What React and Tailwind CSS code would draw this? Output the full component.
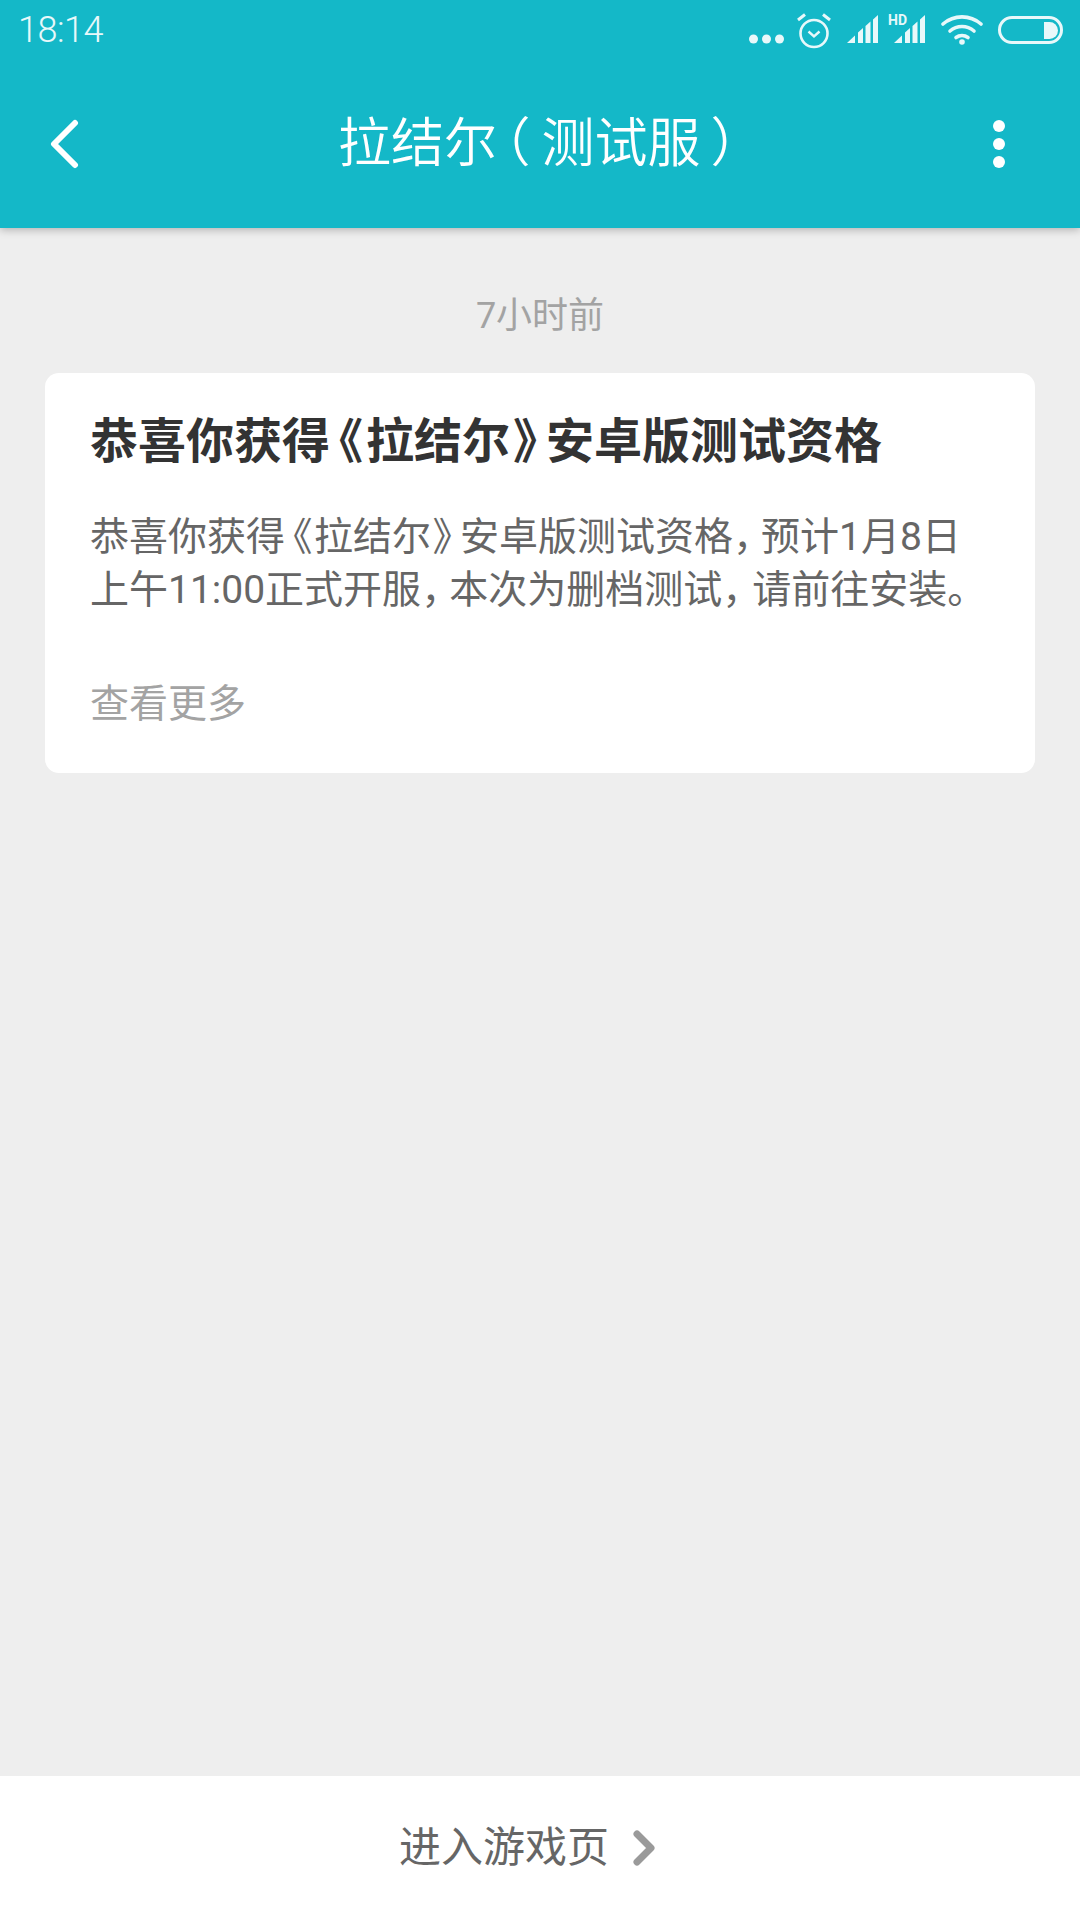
const cjk = { fontFamily: '"Roboto", "Noto Sans CJK SC", sans-serif' };

// half-width punctuation, like the reference font
const halt = "[font-feature-settings:'halt']";

// signal bars, tops follow one slope
function Signal() {
  return (
    <svg width="31" height="28" viewBox="0 0 31 28" fill="#e8f8fa">
      <path d="M0 28L8 20.500V28z" />
      <path d="M11 17.500L16 13V28H11z" />
      <path d="M18.500 11L23.500 6.500V28H18.500z" />
      <path d="M26 4.500L31 0V28H26z" />
    </svg>
  );
}

function StatusIcons() {
  return (
    <div className="flex items-center">
      <svg width="35" height="10" viewBox="0 0 35 10" className="mt-[18px]" fill="#e8f8fa">
        <circle cx="4.500" cy="5" r="4.500" />
        <circle cx="17.500" cy="5" r="4.500" />
        <circle cx="30.500" cy="5" r="4.500" />
      </svg>
      <svg width="34" height="36" viewBox="0 0 34 36" className="ml-[13px] mt-[2px]" fill="none" stroke="#e8f8fa" strokeWidth="2.600">
        <circle cx="17" cy="20.500" r="13.500" />
        <path d="M11.500 18.500l5.500 5 5.500-5" strokeWidth="2.400" />
        <path d="M1 7l7-5.500M33 7l-7-5.500" strokeWidth="3" />
      </svg>
      <div className="ml-[16px] mb-[2px]">
        <Signal />
      </div>
      <div className="relative ml-[15px] mb-[2px] w-[32px] h-[28px] flex justify-end">
        <span className="absolute left-[-5px] top-[-2px] text-[14px] font-bold text-[#e8f8fa] leading-none">HD</span>
        <Signal />
      </div>
      <svg width="42" height="30" viewBox="0 0 42 30" className="ml-[16px]" fill="none" stroke="#e8f8fa" strokeWidth="3.600" strokeLinecap="round">
        <path d="M2 9c11-9.500 27-9.500 38 0" />
        <path d="M9 16c7-6 17-6 24 0" />
        <path d="M15 22.500c3.500-2.500 8.500-2.500 12 0" />
        <circle cx="21" cy="27" r="2.800" fill="#e8f8fa" stroke="none" />
      </svg>
      <div className="ml-[15px] w-[65px] h-[28px] rounded-full border-[3px] border-[#e8f8fa] flex items-center justify-end pr-[2px]">
        <div className="w-[14px] h-[17px] bg-[#e8f8fa] rounded-l-[2px] rounded-r-full" />
      </div>
    </div>
  );
}

export default function App() {
  return (
    <div className="w-[1080px] h-[1920px] flex flex-col bg-[#eeeeee]" style={cjk}>
      <header className="h-[228px] bg-[#14b8c8] flex flex-col shadow-[0_2px_8px_rgba(0,0,0,0.25)] z-10">
        <div className="h-[60px] flex items-center justify-between pl-[18px] pr-[17px]">
          <span className="text-[36px] font-light tracking-[-0.5px] text-[#e8f8fa] leading-none">18:14</span>
          <StatusIcons />
        </div>
        <div className="flex-1 flex items-center justify-between pl-[49px] pr-[74px]">
          <svg width="30" height="54" viewBox="0 0 30 54" fill="none" stroke="#fff" strokeWidth="6" strokeLinecap="round" strokeLinejoin="round">
            <path d="M26 6L5 27l21 21" />
          </svg>
          <h1 className="text-[53px] text-white font-[350] leading-none whitespace-nowrap ml-[4px]">
            拉结尔<span className={`${halt} ml-[7px] mr-[11px]`}>（</span>测试服<span className={`${halt} ml-[10px]`}>）</span>
          </h1>
          <svg width="14" height="50" viewBox="0 0 14 50" fill="#fff">
            <circle cx="7" cy="7" r="6" />
            <circle cx="7" cy="25" r="6" />
            <circle cx="7" cy="43" r="6" />
          </svg>
        </div>
      </header>

      <main className="flex-1 px-[45px]">
        <p className="mt-[66px] text-center text-[36px] leading-[44px] text-[#a3a3a3]">7小时前</p>
        <section className="mt-[35px] bg-white rounded-[14px] pl-[45px] pt-[42px] h-[400px]">
          <h2 className="text-[48px] font-bold leading-[54px] text-[#333333] whitespace-nowrap">
            恭喜你获得<span className={`${halt} ml-[9px] mr-[3px]`}>《</span>拉结尔<span className={`${halt} ml-[3px] mr-[9px]`}>》</span>安卓版测试资格
          </h2>
          <p className="mt-[42px] text-[39px] leading-[53px] text-[#666666] whitespace-nowrap">
            恭喜你获得<span className={`${halt} ml-[8px] mr-[1.500px]`}>《</span>拉结尔<span className={`${halt} ml-[1.500px] mr-[8px]`}>》</span>安卓版测试资格<span className={`${halt} mr-[8.500px]`}>，</span>预计1月8日
            <br />
            上午11:00正式开服<span className={`${halt} mr-[8.500px]`}>，</span>本次为删档测试<span className={`${halt} mr-[10.500px]`}>，</span>请前往安装。
          </p>
          <p className="mt-[62px] text-[39px] leading-[50px] text-[#a3a3a3]">查看更多</p>
        </section>
      </main>

      <footer className="h-[144px] bg-white flex items-center justify-center pr-[24px]">
        <span className="text-[42px] text-[#666666] leading-none">进入游戏页</span>
        <svg width="24" height="38" viewBox="0 0 24 38" className="ml-[24px]" fill="none" stroke="#9a9a9a" strokeWidth="7" strokeLinecap="round" strokeLinejoin="round">
          <path d="M4 5l14 14L4 33" />
        </svg>
      </footer>
    </div>
  );
}
